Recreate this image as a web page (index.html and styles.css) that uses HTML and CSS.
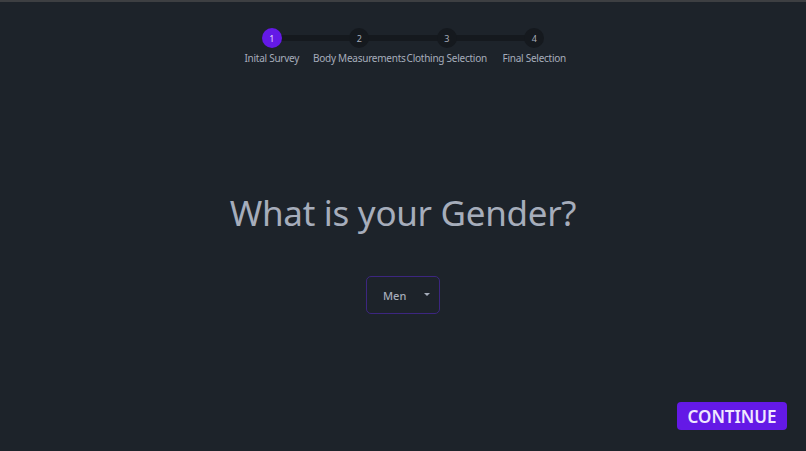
FILE: index.html
```html
<!DOCTYPE html>
<html>
<head>
    <title>Fit Finder</title>
    <link rel="stylesheet" href="styles.css">
</head>
<body>
    <div id="app">
        <ul class="steps">
            <li class="step active"><span class="dot">1</span><span class="label">Inital Survey</span></li>
            <li class="step"><span class="dot">2</span><span class="label">Body Measurements</span></li>
            <li class="step"><span class="dot">3</span><span class="label">Clothing Selection</span></li>
            <li class="step"><span class="dot">4</span><span class="label">Final Selection</span></li>
        </ul>

        <div class="question">
            <h1 class="title">What is your Gender?</h1>
            <div class="select">
                <span>Men</span>
                <span class="caret"></span>
            </div>
        </div>

        <div class="footer">
            <button class="continue">CONTINUE</button>
        </div>
    </div>
</body>
</html>
```

FILE: styles.css
```css
html, body {
    margin: 0;
    height: 100%;
}

body {
    font-family: "Noto Sans", "Open Sans", sans-serif;
    background-color: #1d232a;
    color: #a6adbb;
    border-top: 2px solid #3d3f42;
    box-sizing: border-box;
}

#app {
    height: 100%;
    display: flex;
    flex-direction: column;
}

.steps {
    list-style: none;
    margin: 0;
    padding: 26px 0 0;
    display: flex;
    justify-content: center;
}

.step {
    width: 87.5px;
    display: flex;
    flex-direction: column;
    align-items: center;
    position: relative;
}

.step + .step::before {
    content: "";
    position: absolute;
    top: 7px;
    left: -50%;
    width: 100%;
    height: 6px;
    background-color: #15191e;
}

.dot {
    position: relative;
    z-index: 1;
    width: 20px;
    height: 20px;
    border-radius: 50%;
    background-color: #15191e;
    color: #a6adbb;
    font-size: 9px;
    display: flex;
    align-items: center;
    justify-content: center;
}

.step.active .dot {
    background-color: #6419e6;
    color: #e6dcfb;
}

.label {
    margin-top: 3px;
    font-size: 10px;
    letter-spacing: -0.25px;
    white-space: nowrap;
}

.question {
    flex: 1;
    display: flex;
    flex-direction: column;
    align-items: center;
}

.title {
    margin: 124px 0 0;
    font-size: 35px;
    font-weight: 400;
    color: #a6adbb;
    letter-spacing: -0.3px;
}

.select {
    margin-top: 40px;
    width: 74px;
    height: 38px;
    box-sizing: border-box;
    border: 1px solid #3c2680;
    border-radius: 5px;
    display: flex;
    align-items: center;
    justify-content: space-between;
    padding: 0 9px 0 16px;
    font-size: 11px;
    font-weight: 500;
}

.caret {
    width: 0;
    height: 0;
    border-left: 3px solid transparent;
    border-right: 3px solid transparent;
    border-top: 3px solid #a6adbb;
    margin-top: -2px;
}

.footer {
    display: flex;
    justify-content: flex-end;
    padding: 0 19px 21px 0;
}

.continue {
    font-family: "Noto Sans", "Open Sans", sans-serif;
    background-color: #6419e6;
    color: #f0e8ff;
    border: none;
    border-radius: 4px;
    width: 110px;
    height: 28px;
    font-size: 17px;
    font-weight: 600;
    padding: 0;
    cursor: pointer;
}
```
